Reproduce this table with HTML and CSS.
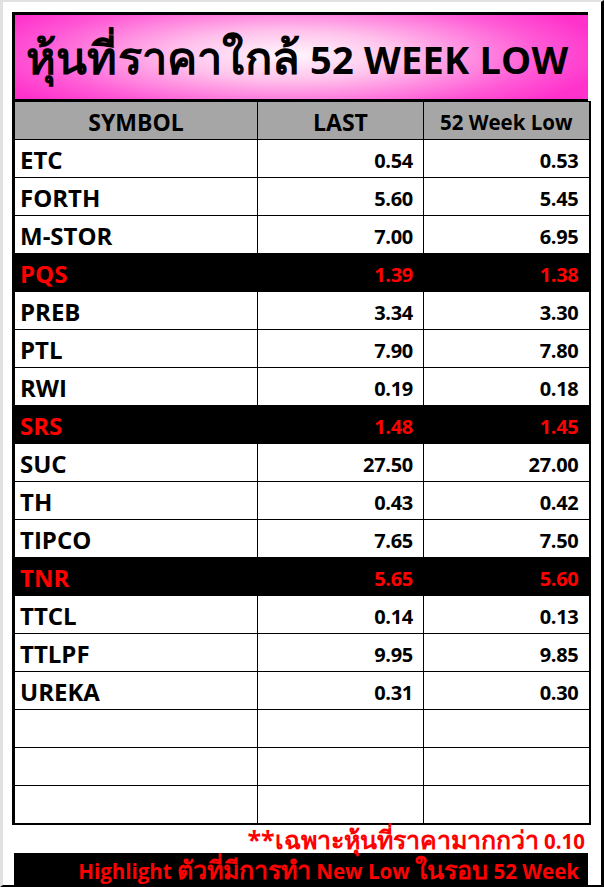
FILE: index.html
```html
<!DOCTYPE html>
<html>
<head>
<meta charset="utf-8">
<link rel="stylesheet" href="styles.css">
</head>
<body>
<div class="page">
  <div class="frame">
    <div class="title"><span class="th">หุ้นที่ราคาใกล้</span> 52 WEEK LOW</div>
    <table class="grid">
      <colgroup><col class="c1"><col class="c2"><col class="c3"></colgroup>
      <thead>
        <tr><th>SYMBOL</th><th>LAST</th><th class="small">52 Week Low</th></tr>
      </thead>
      <tbody>
        <tr><td class="sym">ETC</td><td class="num">0.54</td><td class="num">0.53</td></tr>
        <tr><td class="sym">FORTH</td><td class="num">5.60</td><td class="num">5.45</td></tr>
        <tr><td class="sym">M-STOR</td><td class="num">7.00</td><td class="num">6.95</td></tr>
        <tr class="hl"><td class="sym">PQS</td><td class="num">1.39</td><td class="num">1.38</td></tr>
        <tr><td class="sym">PREB</td><td class="num">3.34</td><td class="num">3.30</td></tr>
        <tr><td class="sym">PTL</td><td class="num">7.90</td><td class="num">7.80</td></tr>
        <tr><td class="sym">RWI</td><td class="num">0.19</td><td class="num">0.18</td></tr>
        <tr class="hl"><td class="sym">SRS</td><td class="num">1.48</td><td class="num">1.45</td></tr>
        <tr><td class="sym">SUC</td><td class="num">27.50</td><td class="num">27.00</td></tr>
        <tr><td class="sym">TH</td><td class="num">0.43</td><td class="num">0.42</td></tr>
        <tr><td class="sym">TIPCO</td><td class="num">7.65</td><td class="num">7.50</td></tr>
        <tr class="hl"><td class="sym">TNR</td><td class="num">5.65</td><td class="num">5.60</td></tr>
        <tr><td class="sym">TTCL</td><td class="num">0.14</td><td class="num">0.13</td></tr>
        <tr><td class="sym">TTLPF</td><td class="num">9.95</td><td class="num">9.85</td></tr>
        <tr><td class="sym">UREKA</td><td class="num">0.31</td><td class="num">0.30</td></tr>
        <tr><td></td><td></td><td></td></tr>
        <tr><td></td><td></td><td></td></tr>
        <tr><td></td><td></td><td></td></tr>
      </tbody>
    </table>
    <div class="note"><span class="th">**เฉพาะหุ้นที่ราคามากกว่า</span> 0.10</div>
    <div class="bar">Highlight <span class="th">ตัวที่มีการทำ</span> New Low <span class="th">ในรอบ</span> 52 Week</div>
  </div>
</div>
</body>
</html>
```

FILE: styles.css
```css
* { box-sizing: border-box; }
html, body { margin: 0; padding: 0; background: #fff; }
body { font-family: "Open Sans", "Noto Sans", "DejaVu Sans", sans-serif; font-weight: 700; }
.page {
  width: 604px;
  height: 887px;
  border-top: 2px solid #e1e1e1;
  border-left: 3px solid #e1e1e1;
  border-right: 3px solid #000;
  border-bottom: 2px solid #000;
  padding: 10px 0 0 9px;
  overflow: hidden;
}
.frame { width: 576px; }
.th { font-size: 1.19em; }
.title {
  height: 89px;
  border-left: 3px solid #000;
  border-top: 3px solid #000;
  border-bottom: 2px solid #000;
  background: radial-gradient(ellipse 320px 70px at 48% 48%, #fff8fc 0%, #ffc2ec 35%, #ff5ad6 78%, #ff33cc 100%);
  font-size: 38px;
  line-height: 84px;
  padding-left: 11px;
  color: #000;
  white-space: nowrap;
  letter-spacing: 0.2px;
  overflow: hidden;
}
.grid {
  width: 576px;
  border-collapse: collapse;
  table-layout: fixed;
  border-left: 3px solid #000;
  border-right: 2px solid #000;
  border-bottom: 2px solid #000;
}
.c1 { width: 244px; }
.c2 { width: 166px; }
.c3 { width: 166px; }
th, td { height: 38px; padding: 0; border: 1px solid #000; }
th {
  background: #a6a6a6;
  font-size: 23px;
  text-align: center;
  font-weight: 700;
  padding-top: 2px;
}
th.small { font-size: 20.5px; }
td.sym { font-size: 24px; text-align: left; padding-left: 5px; padding-top: 1px; }
td.num { font-size: 20px; text-align: right; padding-right: 10px; padding-top: 4px; letter-spacing: -0.3px; }
tr.hl td { background: #000; color: #ff0000; border-left-color: #000; border-right-color: #000; }
.note {
  color: #ff0000;
  font-size: 20.5px;
  text-align: right;
  padding-right: 3px;
  padding-top: 3px;
  height: 28px;
  line-height: 24px;
  white-space: nowrap;
}
.bar {
  margin-left: 2px;
  background: #000;
  color: #ff0000;
  font-size: 20.5px;
  text-align: right;
  padding-right: 9px;
  padding-top: 4px;
  height: 34px;
  line-height: 28px;
  white-space: nowrap;
}
.note .th, .bar .th { font-size: 1.22em; line-height: 22px; display: inline-block; }
```
